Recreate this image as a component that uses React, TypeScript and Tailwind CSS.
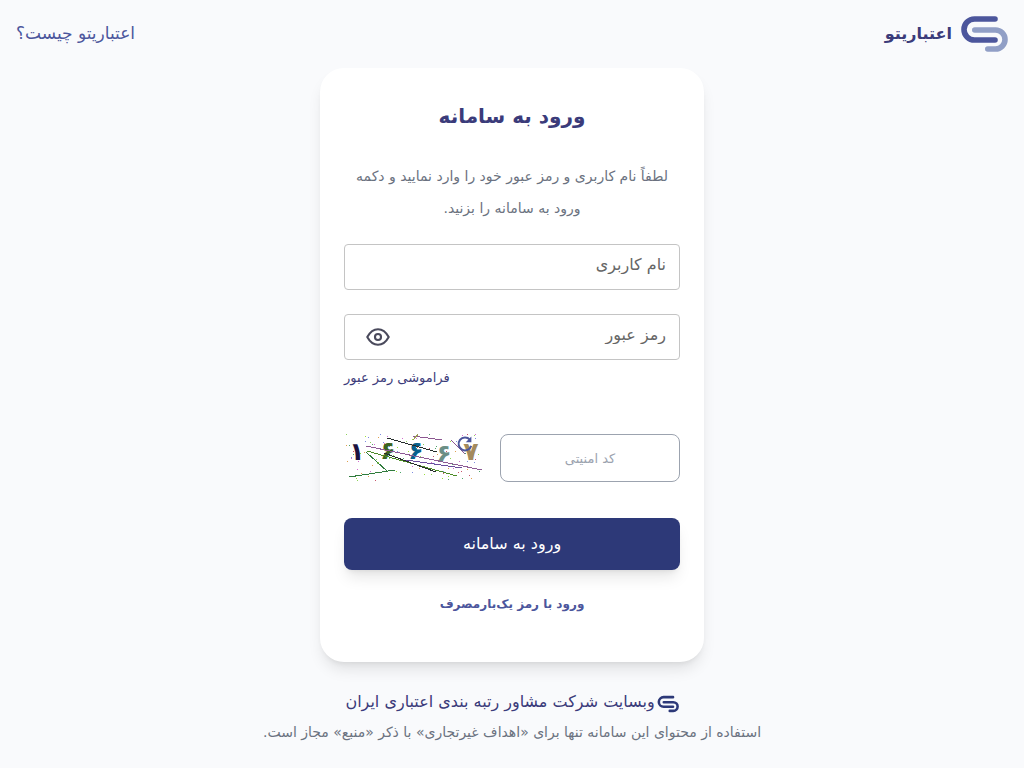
import { useState } from "react";

function Logo({ className, main, accent }: { className: string; main: string; accent: string }) {
  return (
    <svg viewBox="0 0 48 40" className={className} fill="none" strokeWidth="5.6" strokeLinecap="round" aria-hidden="true">
      <path d="M14.8 16H35.5a9.5 9.5 0 0 1 0 19H27.8" stroke={accent} />
      <path d="M35 5H14.5a10.5 10.5 0 0 0 0 21H35" stroke={main} />
    </svg>
  );
}

const speckColors = ["#8fd35a", "#d46fd0", "#7d8be0", "#e0a04f", "#4fa56b", "#c8566b", "#9adf3c"];
const specks = Array.from({ length: 110 }, (_, i) => ({
  x: (i * 61 + ((i * i) % 17) * 5) % 137,
  y: (i * 29 + ((i * i) % 11) * 3) % 47,
  color: speckColors[i % speckColors.length],
}));

function Captcha() {
  return (
    <svg viewBox="0 0 138 48" direction="ltr" className="h-12 w-[138px]" role="img" aria-label="تصویر امنیتی">
      {specks.map((s, i) => (
        <rect key={i} x={s.x} y={s.y} width="1" height="1" fill={s.color} />
      ))}
      <g fontFamily="'DejaVu Sans', sans-serif" fontWeight="700" fontSize="25" textAnchor="middle">
        <text x="11" y="26" fill="#1c1240">۱</text>
        <text x="42" y="25" fill="#3c641f">۶</text>
        <text x="70" y="25" fill="#075f8c">۶</text>
        <text x="98" y="28" fill="#6b8f86">۶</text>
        <text x="125" y="26" fill="#a38a5c">۷</text>
      </g>
      <g fill="none" strokeWidth="1" shapeRendering="crispEdges">
        <path d="M20 12 136 36" stroke="#8d5b94" />
        <path d="M21 17 111 42" stroke="#4b8a25" />
        <path d="M20 18 41 37M3 43 49 36" stroke="#2f7b3c" />
        <path d="M41 4 91 18M38 19 90 38" stroke="#252c2b" />
        <path d="M60 26 116 34" stroke="#6b4d9c" />
        <path d="M67 2 96 6M105 6 119 20" stroke="#8c5791" />
        <path d="M67 6 74-2" stroke="#9a9b54" />
      </g>
    </svg>
  );
}

export default function App() {
  const [visible, setVisible] = useState(false);
  return (
    <div
      dir="rtl"
      lang="fa"
      className="flex min-h-screen flex-col items-center bg-[#f9fafc] font-['DejaVu_Sans',sans-serif] text-[#3b3b7a]"
    >
      <header className="flex h-[68px] w-full items-center justify-between px-4">
        <a href="#home" className="flex items-center gap-2">
          <Logo className="h-10 w-12" main="#4c569c" accent="#919fc6" />
          <span className="text-base font-bold">اعتباریتو</span>
        </a>
        <a href="#about" className="text-[17px] text-[#4c569c]">اعتباریتو چیست؟</a>
      </header>

      <main className="w-full max-w-96 rounded-3xl bg-white px-6 pt-7 pb-[46px] shadow-lg">
        <h1 className="text-center text-xl leading-10 font-bold">ورود به سامانه</h1>
        <p className="mt-6 text-center text-sm leading-8 text-[#6b7280]">
          لطفاً نام کاربری و رمز عبور خود را وارد نمایید و دکمه
          <br />
          ورود به سامانه را بزنید.
        </p>
        <form className="mt-5" onSubmit={(e) => e.preventDefault()}>
          <input
            type="text"
            aria-label="نام کاربری"
            placeholder="نام کاربری"
            className="block h-[46px] w-full rounded border border-[#c4c4c4] px-[13px] pb-1.5 text-base text-[#333] placeholder:text-[#666]"
          />
          <div className="relative mt-6">
            <input
              type={visible ? "text" : "password"}
              aria-label="رمز عبور"
              placeholder="رمز عبور"
              className="block h-[46px] w-full rounded border border-[#c4c4c4] px-[13px] pb-1.5 text-base text-[#333] placeholder:text-[#666]"
            />
            <button
              type="button"
              aria-label="نمایش رمز عبور"
              onClick={() => setVisible(!visible)}
              className="absolute inset-y-0 left-5 flex items-center text-[#4a4a5c]"
            >
              <svg viewBox="0 0 24 24" className="size-7" fill="none" stroke="currentColor" strokeWidth="1.8" strokeLinecap="round" strokeLinejoin="round">
                <path d="M21.2 12c-2.4 4.4-5.5 6.7-9.2 6.7S5.2 16.4 2.8 12C5.2 7.6 8.3 5.3 12 5.3s6.8 2.3 9.2 6.7Z" />
                <circle cx="12" cy="12" r="2.6" />
              </svg>
            </button>
          </div>
          <div className="mt-2 text-end text-[13px] leading-5">
            <a href="#forgot">فراموشی رمز عبور</a>
          </div>

          <div className="mt-[46px] flex items-center gap-4">
            <input
              type="text"
              aria-label="کد امنیتی"
              placeholder="کد امنیتی"
              className="h-12 w-[180px] rounded-lg border border-[#9ca3af] px-3 text-center text-[13px] placeholder:text-[#9ca3af]"
            />
            <div className="relative">
              <Captcha />
              <button type="button" aria-label="کد جدید" className="absolute top-px right-2.5 text-[#4c569c]">
                <svg viewBox="0 0 24 24" className="size-[18px]" fill="none" stroke="currentColor" strokeWidth="2.7">
                  <path d="M18.5 6.2A8.6 8.6 0 1 0 20.3 14.5" />
                  <path d="M20.5 2v7.5H13Z" fill="currentColor" stroke="none" />
                </svg>
              </button>
            </div>
          </div>

          <button
            type="submit"
            className="mt-9 flex h-[52px] w-full items-center justify-center rounded-lg bg-[#2d3978] text-base text-white shadow-lg"
          >
            ورود به سامانه
          </button>
        </form>
        <div className="mt-[22px] text-center text-xs leading-6 font-bold text-[#4c569c]">
          <a href="#otp">ورود با رمز یک‌بارمصرف</a>
        </div>
      </main>

      <footer className="mt-7 flex flex-col items-center gap-1.5 px-4 text-center">
        <a href="#company" className="flex items-center gap-0.5 text-base leading-6">
          <Logo className="mt-1 h-5 w-[22px]" main="#2d3978" accent="#2d3978" />
          <span>وبسایت شرکت مشاور رتبه بندی اعتباری ایران</span>
        </a>
        <p className="text-sm leading-6 text-[#6b7280]">
          استفاده از محتوای این سامانه تنها برای «اهداف غیرتجاری» با ذکر «منبع» مجاز است.
        </p>
      </footer>
    </div>
  );
}
